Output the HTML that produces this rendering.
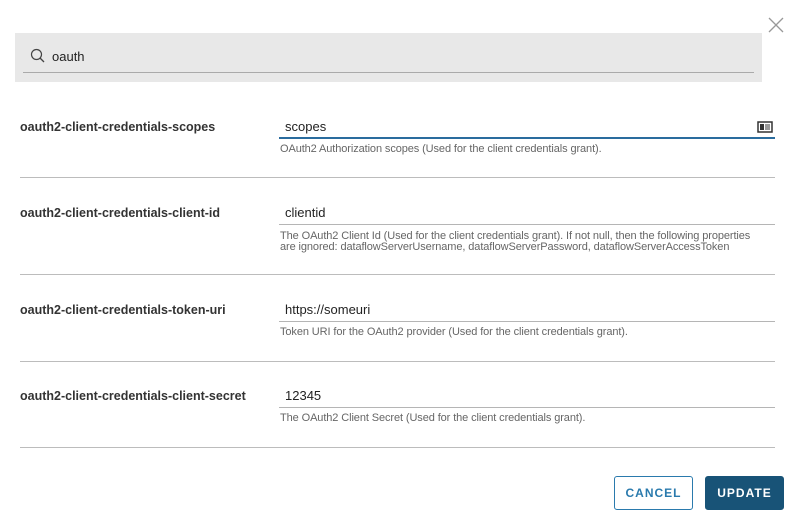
<!DOCTYPE html>
<html><head><style>
body{margin:0;width:800px;height:525px;background:#fff;font-family:"Liberation Sans",sans-serif;position:relative;overflow:hidden;color:#333}
.a{position:absolute}
.lbl{left:20px;font-size:12.5px;font-weight:bold;color:#333}
.val{left:285px;font-size:13px;color:#222}
.ul{left:279px;width:496px;height:1px;background:#b5b5b5}
.help{left:280px;font-size:11px;color:#666;line-height:11px;letter-spacing:-0.1px}
.sep{left:20px;width:755px;height:1px;background:#bcbcbc}
.btn{top:476px;height:34px;width:79px;box-sizing:border-box;border-radius:3px;font-size:12px;font-weight:bold;letter-spacing:1px;text-align:center;line-height:32px}
</style></head><body>
<svg class="a" style="left:768px;top:17px" width="16" height="16"><path d="M1 1L15 15M15 1L1 15" stroke="#999" stroke-width="1.3"/></svg>
<div class="a" style="left:15px;top:33px;width:747px;height:49px;background:#e8e8e8"></div>
<div class="a" style="left:23px;top:72px;width:731px;height:1px;background:#aaa"></div>
<svg class="a" style="left:30px;top:48px" width="16" height="16"><circle cx="6.5" cy="6.5" r="5" fill="none" stroke="#444" stroke-width="1.2"/><path d="M10 10L14 14" stroke="#444" stroke-width="1.3"/></svg>
<div class="a" style="left:52px;top:49px;font-size:13px;color:#222">oauth</div>

<div class="a lbl" style="top:120px">oauth2-client-credentials-scopes</div>
<div class="a val" style="top:119px">scopes</div>
<div class="a" style="left:279px;top:137px;width:496px;height:2px;background:#2a6c9e"></div>
<svg class="a" style="left:757px;top:121px" width="16" height="12"><rect x="1" y="1" width="14" height="10" fill="none" stroke="#333" stroke-width="1.5"/><rect x="3" y="3" width="4" height="6" fill="#333"/><path d="M8 4h5M8 6h5M8 8h5" stroke="#333"/></svg>
<div class="a help" style="top:144px">OAuth2 Authorization scopes (Used for the client credentials grant).</div>
<div class="a sep" style="top:177px"></div>

<div class="a lbl" style="top:206px">oauth2-client-credentials-client-id</div>
<div class="a val" style="top:205px">clientid</div>
<div class="a ul" style="top:224px"></div>
<div class="a help" style="top:231px">The OAuth2 Client Id (Used for the client credentials grant). If not null, then the following properties<br>are ignored: dataflowServerUsername, dataflowServerPassword, dataflowServerAccessToken</div>
<div class="a sep" style="top:274px"></div>

<div class="a lbl" style="top:303px">oauth2-client-credentials-token-uri</div>
<div class="a val" style="top:302px">https://someuri</div>
<div class="a ul" style="top:321px"></div>
<div class="a help" style="top:327px">Token URI for the OAuth2 provider (Used for the client credentials grant).</div>
<div class="a sep" style="top:361px"></div>

<div class="a lbl" style="top:389px">oauth2-client-credentials-client-secret</div>
<div class="a val" style="top:388px">12345</div>
<div class="a ul" style="top:407px"></div>
<div class="a help" style="top:413px">The OAuth2 Client Secret (Used for the client credentials grant).</div>
<div class="a sep" style="top:447px"></div>

<div class="a btn" style="left:614px;border:1px solid #2a7aad;color:#2a7aad;background:#fff">CANCEL</div>
<div class="a btn" style="left:705px;background:#185377;color:#fff;border:1px solid #185377">UPDATE</div>
</body></html>
